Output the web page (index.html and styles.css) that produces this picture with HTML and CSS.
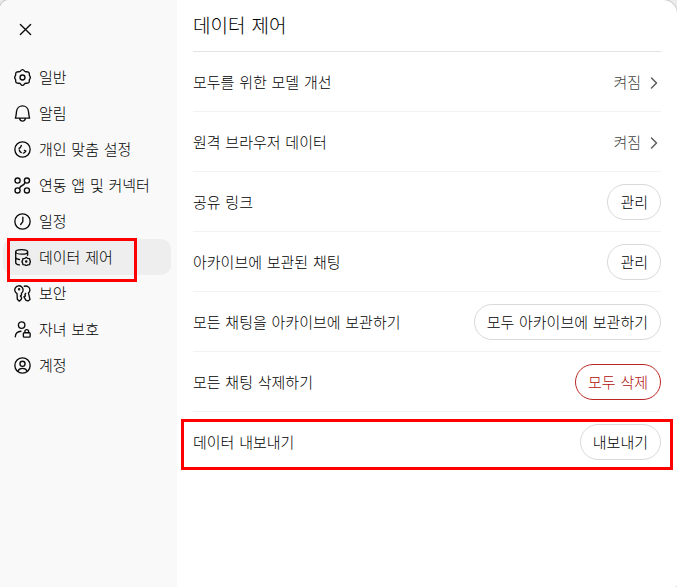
FILE: index.html
```html
<!DOCTYPE html>
<html lang="ko">
<head>
    <meta charset="UTF-8">
    <meta name="viewport" content="width=device-width, initial-scale=1.0">
    <title>데이터 제어</title>
    <link rel="stylesheet" href="styles.css">
</head>
<body>
    <div class="modal">
        <aside class="sidebar">
            <button class="close" type="button" aria-label="닫기">
                <svg class="icon" viewBox="0 0 20 20"><path d="M4 4l12 12M16 4L4 16"/></svg>
            </button>
            <nav class="menu">
                <button class="menu-item" type="button">
                    <svg class="icon" viewBox="0 0 20 20"><path d="M7.6 2.6Q10-1 12.4 2.6Q13 3.4 14.2 3.2Q18.4 3 18 6.6Q18 7.6 18.6 8.3Q19.8 10 18.6 11.7Q18 12.4 18 13.4Q18.4 17 14.2 16.8Q13 16.6 12.4 17.4Q10 21 7.6 17.4Q7 16.6 5.8 16.8Q1.6 17 2 13.4Q2 12.4 1.4 11.7Q.2 10 1.4 8.3Q2 7.6 2 6.6Q1.6 3 5.8 3.2Q7 3.4 7.6 2.6z"/><circle cx="10" cy="10" r="2.9"/></svg>
                    <span>일반</span>
                </button>
                <button class="menu-item" type="button">
                    <svg class="icon" viewBox="0 0 20 20"><path d="M1.6 15.5C2.6 13 2.6 11 2.9 8C3.3 3.8 6.3 1 10 1s6.7 2.8 7.1 7c.3 3 .3 5 1.3 7.5zM6.5 15.8c.5 2 1.8 3.2 3.5 3.2s3-1.2 3.5-3.2"/></svg>
                    <span>알림</span>
                </button>
                <button class="menu-item" type="button">
                    <svg class="icon" viewBox="0 0 20 20"><circle cx="10" cy="10" r="9"/><path d="M8.6 5.2Q8.2 7.8 6 8.8M6.2 10.4Q6.4 12.6 8.6 13.6M11 14.2Q13 14 13.6 12.2M12.2 11l1.8.8"/></svg>
                    <span>개인 맞춤 설정</span>
                </button>
                <button class="menu-item" type="button">
                    <svg class="icon" viewBox="0 0 20 20"><circle cx="4.2" cy="4.2" r="3"/><circle cx="15.2" cy="4.2" r="3"/><circle cx="4.2" cy="15.8" r="3"/><circle cx="15.2" cy="15.8" r="3"/><path d="M13 6.4Q12.2 9 9.7 10T6.4 13.6"/></svg>
                    <span>연동 앱 및 커넥터</span>
                </button>
                <button class="menu-item" type="button">
                    <svg class="icon" viewBox="0 0 20 20"><circle cx="10" cy="10" r="9"/><path d="M10.4 5v5.2L7.8 13.5"/></svg>
                    <span>일정</span>
                </button>
                <button class="menu-item active" type="button" aria-current="page">
                    <svg class="icon" viewBox="0 0 20 20"><ellipse cx="9" cy="3.4" rx="7" ry="2.6"/><path d="M2 3.4v12.4c0 1.6 1.8 2.6 4.4 2.9M16 3.4v4M2 9.6c0 1.4 1.8 2.4 4.4 2.8"/><path d="M14.4 9.8l1.7 1.3 2.2.3.4 1.9.8 1.5-.8 1.6-.4 1.9-2.2.3-1.7 1.2-1.7-1.2-2.2-.3-.4-1.9-.8-1.6.8-1.5.4-1.9 2.2-.3z"/><circle cx="14.4" cy="14.8" r=".7"/></svg>
                    <span>데이터 제어</span>
                    <span class="mark mark-menu"></span>
                </button>
                <button class="menu-item" type="button">
                    <svg class="icon" viewBox="0 0 20 20"><path d="M3.6 10.2A4.9 4.9 0 1 1 8.8 9.7v2L7.5 13l1.3 1.4v2.2L6.3 19l-2.4-2.3z"/><circle cx="6" cy="5" r=".6"/><path d="M12.2 1.5c3.4-1 6.4 1 6.5 4 .1 1.7-.7 3-1.7 4l1.8 7.5-2.4 1.8-2.2-.8-2.5-4 1.8-1.2-.7-1.8 1-1.2"/></svg>
                    <span>보안</span>
                </button>
                <button class="menu-item" type="button">
                    <svg class="icon" viewBox="0 0 20 20"><circle cx="9" cy="4.8" r="3.8"/><path d="M1.5 18.5c.3-4 2.7-6.3 6.7-6.5"/><rect x="11" y="13.8" width="8" height="5.2" rx="1"/><path d="M12.8 13.6v-1.2a2.2 2.2 0 0 1 4.4 0v1.2"/></svg>
                    <span>자녀 보호</span>
                </button>
                <button class="menu-item" type="button">
                    <svg class="icon" viewBox="0 0 20 20"><circle cx="10" cy="10" r="9"/><circle cx="10" cy="8" r="3"/><path d="M4.5 16.8c.8-2.4 2.8-3.5 5.5-3.5s4.7 1.1 5.5 3.5"/></svg>
                    <span>계정</span>
                </button>
            </nav>
        </aside>

        <main class="content">
            <h1 class="title">데이터 제어</h1>
            <div class="row">
                <span>모두를 위한 모델 개선</span>
                <button class="state" type="button">켜짐
                    <svg class="chevron" viewBox="0 0 8 14"><path d="M1.5 2L6.5 7l-5 5"/></svg>
                </button>
            </div>
            <div class="row">
                <span>원격 브라우저 데이터</span>
                <button class="state" type="button">켜짐
                    <svg class="chevron" viewBox="0 0 8 14"><path d="M1.5 2L6.5 7l-5 5"/></svg>
                </button>
            </div>
            <div class="row">
                <span>공유 링크</span>
                <button class="btn" type="button">관리</button>
            </div>
            <div class="row">
                <span>아카이브에 보관된 채팅</span>
                <button class="btn" type="button">관리</button>
            </div>
            <div class="row">
                <span>모든 채팅을 아카이브에 보관하기</span>
                <button class="btn" type="button">모두 아카이브에 보관하기</button>
            </div>
            <div class="row">
                <span>모든 채팅 삭제하기</span>
                <button class="btn btn-danger" type="button">모두 삭제</button>
            </div>
            <div class="row">
                <span>데이터 내보내기</span>
                <button class="btn" type="button">내보내기</button>
                <span class="mark mark-row"></span>
            </div>
        </main>
    </div>
</body>
</html>
```
FILE: styles.css
```css
* {
    box-sizing: border-box;
}

body {
    margin: 0;
    background-color: #ebebeb;
    color: #000;
    font-family: "DejaVu Sans", "Noto Sans CJK KR", sans-serif;
    font-size: 15px;
    font-weight: 300;
    line-height: 22px;
}

button {
    border: 0;
    background: none;
    color: inherit;
    font: inherit;
    cursor: pointer;
}

.modal {
    display: flex;
    min-height: 100vh;
    overflow: hidden;
    background-color: #fff;
    border-radius: 9px 14px 2px 0;
    box-shadow: 0 0 0 1px #c8c8c8;
}

/* 왼쪽 메뉴 */
.sidebar {
    flex: 0 0 177px;
    padding: 11px 6px 0 3px;
    background-color: #f9f9f9;
}

.close {
    display: flex;
    align-items: center;
    justify-content: center;
    width: 36px;
    height: 36px;
    margin: 0 0 12px 4px;
    padding: 0;
}

.menu {
    display: flex;
    flex-direction: column;
}

.menu-item {
    position: relative;
    display: flex;
    align-items: center;
    gap: 8px;
    height: 36px;
    padding: 0 11px;
    border-radius: 10px;
    text-align: left;
    white-space: nowrap;
}

.menu-item.active {
    background-color: #eee;
}

.menu-item > span {
    padding-top: 1px;
}

.icon {
    flex: none;
    width: 17px;
    height: 17px;
    fill: none;
    stroke: #0d0d0d;
    stroke-width: 1.6;
    stroke-linecap: round;
    stroke-linejoin: round;
}

/* 오른쪽 설정 목록 */
.content {
    flex: 1;
    min-width: 0;
    padding: 0 16px;
}

.title {
    margin: 0;
    padding: 12px 0 11px;
    border-bottom: 1px solid #e3e3e3;
    font-size: 19px;
    font-weight: 300;
    line-height: 28px;
}

.row {
    position: relative;
    display: flex;
    align-items: center;
    justify-content: space-between;
    gap: 12px;
    min-height: 60px;
    border-bottom: 1px solid #f2f2f2;
}

.row:last-child {
    border-bottom-color: transparent;
}

.row > span {
    padding-top: 2px;
}

.state {
    display: flex;
    align-items: center;
    gap: 9px;
    padding: 2px 3px 0 0;
    color: #444;
}

.chevron {
    width: 8px;
    height: 14px;
    fill: none;
    stroke: #5d5d5d;
    stroke-width: 1.5;
    stroke-linecap: round;
    stroke-linejoin: round;
}

.btn {
    height: 36px;
    padding: 2px 12px 0;
    border: 1px solid #d9d9d9;
    border-radius: 18px;
    white-space: nowrap;
}

.btn-danger {
    border-color: #ba2623;
    color: #b00d0a;
}

/* 빨간 강조 표시 */
.mark {
    position: absolute;
    z-index: 1;
    border: 3px solid #f00;
    pointer-events: none;
}

.mark-menu {
    inset: -1px 34px -7px 4px;
}

.mark-row {
    inset: 7px -12px 1px;
}
```
